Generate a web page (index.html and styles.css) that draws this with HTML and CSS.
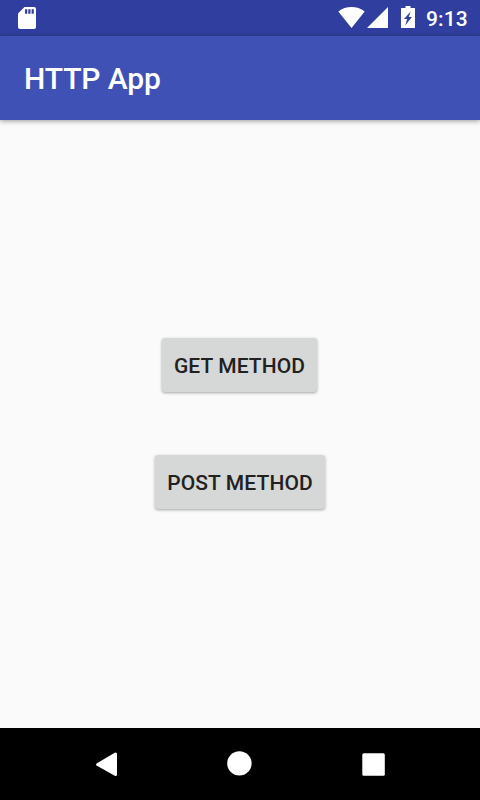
FILE: index.html
```
<!DOCTYPE html>
<html lang="en">
<head>
<meta charset="utf-8">
<title>HTTP App</title>
<link rel="stylesheet" href="styles.css">
</head>
<body>
<div class="screen">
  <div class="status-bar">
    <svg class="icon-sd" width="18" height="22" viewBox="0 0 18 22">
      <path fill="#fff" d="M6.500 0H16a2 2 0 0 1 2 2v18a2 2 0 0 1-2 2H2a2 2 0 0 1-2-2V6.500z"/>
      <path fill="#303f9f" d="M7 2.300h2.200v4.400H7zM10.300 2.300h2.200v4.400h-2.200zM13.600 2.300h2.200v4.400h-2.200z"/>
    </svg>
    <svg class="icon-wifi" width="27" height="21" viewBox="0 0 27 21">
      <path fill="#fff" d="M13.500 21L.3 4.400C4.200 1.500 8.700 0 13.500 0s9.300 1.500 13.200 4.400z"/>
    </svg>
    <svg class="icon-signal" width="21" height="21" viewBox="0 0 21 21">
      <path fill="#fff" d="M0 21L21 0v21z"/>
    </svg>
    <svg class="icon-battery" width="14" height="22" viewBox="0 0 14 22">
      <path fill="#fff" d="M4.500 0h5v2H13.500a.5.5 0 0 1 .5.5v19a.5.5 0 0 1-.5.5H.5a.5.5 0 0 1-.5-.5v-19a.5.5 0 0 1 .5-.5h4z"/>
      <path fill="#303f9f" d="M9.700 5.500L3 13h3.200l-2 6.500L10.900 11H7.700z"/>
    </svg>
    <span class="clock">9:13</span>
  </div>
  <header class="app-bar"><h1 class="title">HTTP App</h1></header>
  <main class="content">
    <button class="btn btn-get">GET METHOD</button>
    <button class="btn btn-post">POST METHOD</button>
  </main>
  <nav class="nav-bar">
    <svg class="nav-back" width="22" height="26" viewBox="0 0 22 26">
      <path fill="#fff" stroke="#fff" stroke-width="3" stroke-linejoin="round" d="M1.700 13.500L19.500 3v20.500z"/>
    </svg>
    <svg class="nav-home" width="26" height="26" viewBox="0 0 26 26">
      <circle cx="13.400" cy="13.400" r="12.200" fill="#fff"/>
    </svg>
    <svg class="nav-recent" width="23" height="23" viewBox="0 0 23 23">
      <rect x=".3" y=".2" width="22.500" height="22.600" rx="1.500" fill="#fff"/>
    </svg>
  </nav>
</div>
</body>
</html>
```

FILE: styles.css
```
* {
  box-sizing: border-box;
}

body {
  margin: 0;
  font-family: Roboto, "Liberation Sans", sans-serif;
}

svg {
  display: block;
  flex: none;
}

.screen {
  display: flex;
  flex-direction: column;
  width: 480px;
  height: 800px;
  background: #fafafa;
}

.status-bar {
  display: flex;
  align-items: flex-start;
  height: 36px;
  padding: 7px 12px 0 18px;
  background: #303f9f;
}

.icon-wifi {
  margin-left: auto;
}

.icon-signal {
  margin-left: 2px;
}

.icon-battery {
  margin: -1px 11px 0 13px;
}

.clock {
  width: 42px;
  font-size: 21px;
  font-weight: 500;
  line-height: 24px;
  letter-spacing: 0.1px;
  color: #fff;
  white-space: nowrap;
}

.app-bar {
  display: flex;
  align-items: center;
  height: 84px;
  padding: 2px 24px 0;
  background: #3f51b5;
  box-shadow: 0 1px 5px rgba(0, 0, 0, 0.4);
}

.title {
  margin: 0;
  font-size: 30px;
  font-weight: 500;
  line-height: 36px;
  letter-spacing: -0.1px;
  color: #fff;
}

.content {
  flex: 1;
  display: flex;
  flex-direction: column;
  align-items: center;
  gap: 63px;
  padding-top: 218px;
}

.btn {
  height: 54px;
  padding: 2px 0 0;
  border: 0;
  border-radius: 3px;
  background: #d6d7d7;
  box-shadow: 0 1px 3px rgba(0, 0, 0, 0.35);
  font: 500 21px/24px Roboto, "Liberation Sans", sans-serif;
  letter-spacing: 0.1px;
  color: #212121;
}

.btn-get {
  width: 155px;
  margin-right: 1px;
}

.btn-post {
  width: 170px;
}

.nav-bar {
  display: flex;
  height: 72px;
  padding-left: 96px;
  background: #000;
}

.nav-back {
  margin-top: 23px;
}

.nav-home {
  margin: 22px 0 0 108px;
}

.nav-recent {
  margin: 25px 0 0 110px;
}
```
